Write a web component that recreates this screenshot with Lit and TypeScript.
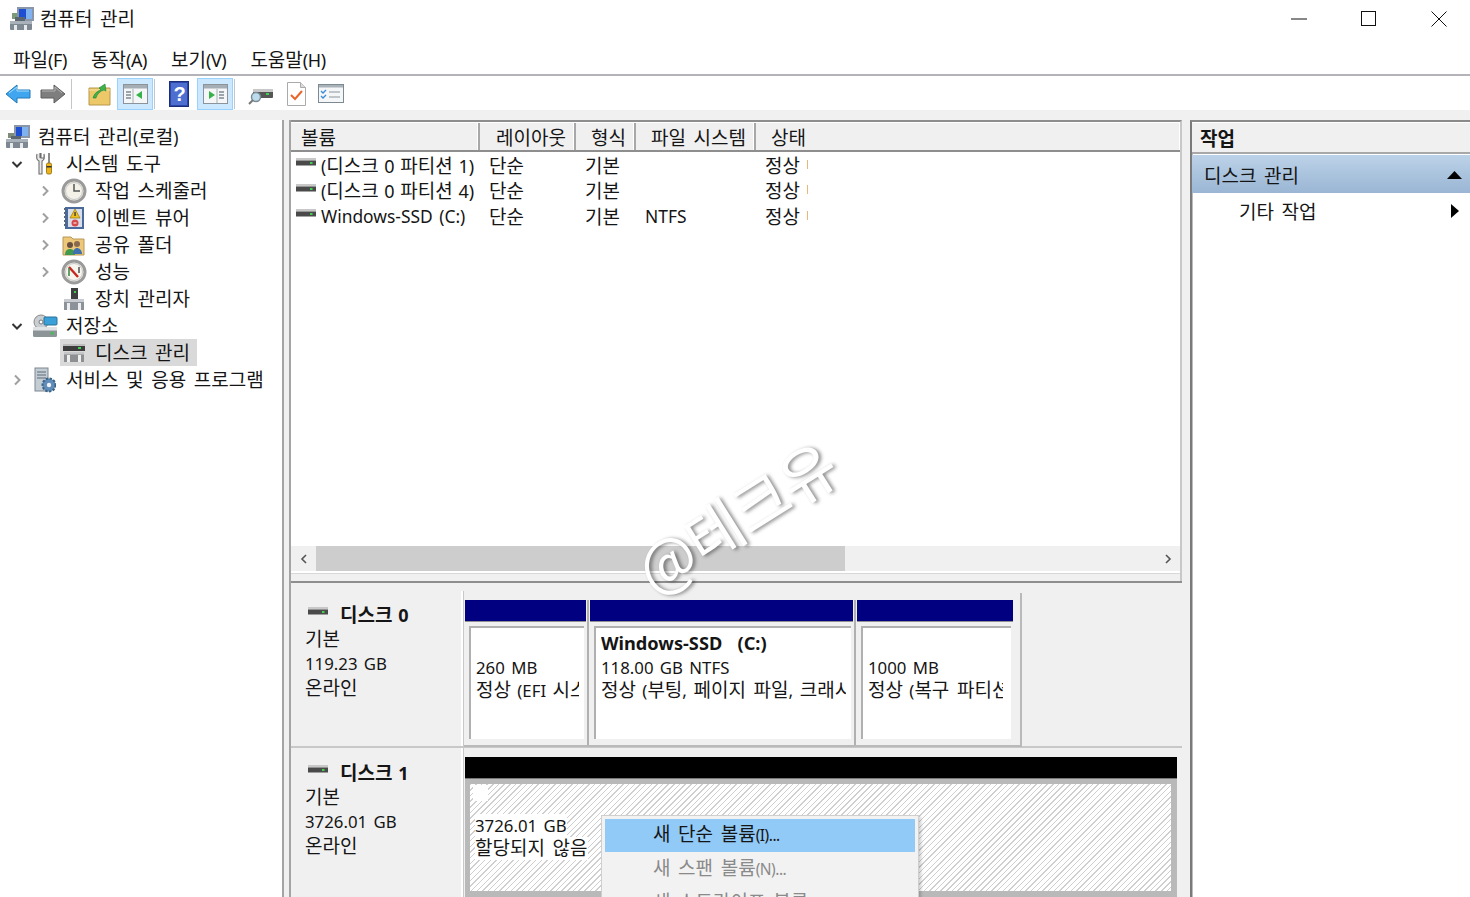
import { LitElement, html, css, svg } from "lit";
import { customElement } from "lit/decorators.js";

const icon = (w: number, h: number, body: unknown) =>
  html`<svg class="ic" width=${w} height=${h} viewBox="0 0 ${w} ${h}">${body}</svg>`;

/* Hangul and Latin need different sizes to match the reference's font: split a label into runs. */
const latClass = (run: string) =>
  /^\s*\d\)?\s*$/.test(run) ? "lat one" : /^[\s0-9.]+/.test(run) ? "lat num" : "lat";
const t = (s: string) =>
  s.split(/([\uAC00-\uD7A3]+(?: [\uAC00-\uD7A3]+)*)/).filter(Boolean).map((run) =>
    /[\uAC00-\uD7A3]/.test(run)
      ? html`<span>${run}</span>`
      : html`<span class=${latClass(run)}>${run}</span>`);

const computerIcon = () => icon(26, 26, svg`
  <rect x="9" y="1" width="16" height="13" fill="#8a97a8"/><rect x="11" y="3" width="12" height="9" fill="#1d4fd0"/><rect x="17" y="3" width="6" height="9" fill="#7fb2ee"/>
  <path d="M3 9h6v5H3z" fill="#7c8c78"/>
  <rect x="1" y="15" width="22" height="9" rx="1" fill="#7d8893"/><rect x="1" y="15" width="22" height="3" fill="#a9b2ba"/>
  <rect x="6" y="12" width="10" height="3" fill="#5c6670"/>
  <rect x="5" y="19" width="3" height="5" fill="#e6e8ea"/><rect x="15" y="19" width="3" height="5" fill="#e6e8ea"/>`);
const toolsIcon = () => icon(20, 24, svg`
  <path d="M5 1v5M2 2c-1 4 0 6 2 7v13h3V9c2-1 3-3 2-7v4H6V1" fill="#e8e8e8" stroke="#6d6d6d" stroke-width="1.1"/>
  <rect x="13" y="1" width="2" height="10" fill="#8c8c8c"/><rect x="11.5" y="11" width="5" height="11" rx="1.5" fill="#eeb416" stroke="#8c6a10" stroke-width=".8"/>
  <rect x="11.5" y="14" width="5" height="1.5" fill="#333"/>`);
const clockIcon = () => icon(26, 26, svg`
  <circle cx="13" cy="13" r="11" fill="#eeebe0" stroke="#9a9a9a" stroke-width="3"/><circle cx="13" cy="13" r="8.5" fill="#f3f1e8" stroke="#c8c8c8"/>
  <path d="M13 6v7h6" fill="none" stroke="#555" stroke-width="1.5"/>`);
const eventIcon = () => icon(22, 24, svg`
  <rect x="2" y="1" width="19" height="22" fill="#4a6a9c"/><rect x="5" y="3" width="14" height="18" fill="#d8dfeb"/>
  <path d="M2 3h-1M2 7h-1M2 11h-1M2 15h-1M2 19h-1" stroke="#333" stroke-width="1.4"/>
  <path d="M12 3l5 9H7z" fill="#f0c020" stroke="#9a7a10" stroke-width=".7"/><rect x="11.4" y="6" width="1.3" height="4" fill="#333"/>
  <circle cx="12" cy="17" r="3.5" fill="#d84a4a"/><path d="M10.5 17h3" stroke="#fff"/>`);
const shareIcon = () => icon(24, 22, svg`
  <path d="M1 3h8l2 2h11v16H1z" fill="#ecc878" stroke="#b8965a"/>
  <circle cx="8" cy="11" r="3" fill="#6a5040"/><path d="M3 21c0-4 2-6 5-6s5 2 5 6z" fill="#3f9a50"/>
  <circle cx="15" cy="10" r="3" fill="#8a6a50"/><path d="M11 20c0-4 2-6 4-6s5 2 5 6z" fill="#3f70b0"/>`);
const perfIcon = () => icon(26, 26, svg`
  <circle cx="13" cy="13" r="11" fill="#eeebe0" stroke="#9a9a9a" stroke-width="3"/><circle cx="13" cy="13" r="8.5" fill="#f7f5ee" stroke="#c8c8c8"/>
  <path d="M8 8l9 10" stroke="#c9251f" stroke-width="2.4"/><path d="M8 9v8" stroke="#3a8a4a" stroke-width="1.6"/><path d="M18 8v6" stroke="#444" stroke-width="1.4"/>`);
const devIcon = () => icon(22, 24, svg`
  <rect x="8" y="1" width="7" height="11" fill="#3f3f3f"/><rect x="11" y="4" width="2" height="2" fill="#3fcf4f"/>
  <rect x="1" y="12" width="20" height="11" fill="#8b929a"/><rect x="1" y="12" width="20" height="3" fill="#c8ccd0"/>
  <rect x="4" y="16" width="3" height="7" fill="#eee"/><rect x="15" y="16" width="3" height="7" fill="#eee"/>`);
const storageIcon = () => icon(26, 24, svg`
  <circle cx="9" cy="8" r="7" fill="#c9ced2" stroke="#888"/><circle cx="9" cy="8" r="2" fill="#fff" stroke="#777"/>
  <rect x="12" y="3" width="13" height="8" rx="1" fill="#3aa0d8" stroke="#2b7299"/>
  <rect x="1" y="13" width="24" height="10" rx="1.5" fill="#8d9498"/><rect x="1" y="13" width="24" height="3.5" fill="#dfe3e5"/><rect x="19" y="18" width="2.5" height="2.5" fill="#35c646"/>`);
const diskMgrIcon = () => icon(24, 20, svg`
  <rect x="1" y="1" width="22" height="7" fill="#3c3c3c"/><rect x="1" y="1" width="22" height="2" fill="#bdbdbd"/><rect x="16" y="4" width="3" height="2" fill="#42d04f"/>
  <rect x="2" y="9" width="20" height="10" fill="#8d8f92"/><rect x="2" y="9" width="20" height="2.5" fill="#c4c6c8"/>
  <rect x="5" y="12" width="3" height="7" fill="#eee"/><rect x="16" y="12" width="3" height="7" fill="#eee"/>`);
const svcIcon = () => icon(22, 26, svg`
  <rect x="1" y="1" width="13" height="23" fill="#c4ccd4" stroke="#7d8890"/>
  <path d="M3 5h9M3 8h9M3 11h9" stroke="#5c6a76"/><rect x="10" y="14" width="2" height="2" fill="#4ccf5a"/>
  <circle cx="15" cy="18" r="6.5" fill="#5f8cb8" stroke="#3c6488" stroke-width="2" stroke-dasharray="2.4 1.4"/><circle cx="15" cy="18" r="2.2" fill="#eef3f8"/>`);
const volIcon = (w = 20) => icon(w, 9, svg`
  <rect x="0" y="0" width=${w} height="2.5" fill="#c8c8c8"/><rect x="0" y="2.5" width=${w} height="5" fill="#4a4a4a"/><rect x=${w - 6} y="4" width="2.5" height="2" fill="#3fd04f"/>`);
const chev = (open: boolean) => open
  ? icon(12, 12, svg`<path d="M1.5 4l4.5 4.5L10.5 4" fill="none" stroke="#333" stroke-width="2"/>`)
  : icon(12, 12, svg`<path d="M4 1.5L8.5 6 4 10.5" fill="none" stroke="#a0a0a0" stroke-width="2"/>`);

const paneIcon = (left: boolean) => icon(25, 20, svg`
  <rect x="0.5" y="0.5" width="24" height="19" fill="#f4f6f7" stroke="#8a949a"/><rect x="1" y="1" width="23" height="3.5" fill="#a4aeb4"/>
  <path d="M${left ? 3 : 16} 8h5M${left ? 3 : 16} 11h5M${left ? 3 : 16} 14h5" stroke="#7e8a92" stroke-width="1.3"/>
  <path d="M${left ? 10 : 14} 5v14" stroke="#a8b0b6"/>
  ${left ? svg`<path d="M19 7v8l-6-4z" fill="#37b24a"/>` : svg`<path d="M6 7v8l6-4z" fill="#37b24a"/>`}`);

interface TreeNode { label: string; level: number; ic: () => unknown; chev?: "open" | "closed"; sel?: boolean; }
const tree: TreeNode[] = [
  { label: "컴퓨터 관리(로컬)", level: 0, ic: computerIcon },
  { label: "시스템 도구", level: 1, ic: toolsIcon, chev: "open" },
  { label: "작업 스케줄러", level: 2, ic: clockIcon, chev: "closed" },
  { label: "이벤트 뷰어", level: 2, ic: eventIcon, chev: "closed" },
  { label: "공유 폴더", level: 2, ic: shareIcon, chev: "closed" },
  { label: "성능", level: 2, ic: perfIcon, chev: "closed" },
  { label: "장치 관리자", level: 2, ic: devIcon },
  { label: "저장소", level: 1, ic: storageIcon, chev: "open" },
  { label: "디스크 관리", level: 2, ic: diskMgrIcon, sel: true },
  { label: "서비스 및 응용 프로그램", level: 1, ic: svcIcon, chev: "closed" },
];

const vols = [
  ["(디스크 0 파티션 1)", "단순", "기본", "", "정상"],
  ["(디스크 0 파티션 4)", "단순", "기본", "", "정상"],
  ["Windows-SSD (C:)", "단순", "기본", "NTFS", "정상"],
];

@customElement("app-root")
export class AppRoot extends LitElement {
  static styles = css`
    :host { display: block; width: 1470px; height: 897px; overflow: hidden; position: relative; background: #fff; color: #151515;
      font-family: "Noto Sans", "Noto Sans CJK KR", sans-serif; font-size: 19px; word-spacing: 2.7px; }
    * { box-sizing: border-box; }
    .ic { display: block; flex: none; }
    .lat { font-size: 17.4px; word-spacing: 2px; }
    .lat.num { font-size: 16.8px; }
    .lat.one { font-size: 18px; word-spacing: 1px; }
    .title { height: 38px; display: flex; align-items: center; padding-left: 10px; gap: 6px; position: relative; }
    .title .t { line-height: 38px; }
    .winbtns { margin-left: auto; display: flex; }
    .winbtn { width: 70px; height: 38px; display: flex; align-items: center; justify-content: flex-end; padding-right: 23px; }
    .menu { height: 38px; border-bottom: 2px solid #b4b4b8; display: flex; padding-left: 13px; gap: 24px; align-items: center; padding-top: 5px; }
    .menu .lat { font-size: 18px; letter-spacing: -.4px; }
    .tools { height: 34px; display: flex; align-items: center; padding: 2px 0 0 5px; }
    .sep { width: 1px; height: 30px; background: #c6c6c6; margin: 0 2px; }
    .tbtn { height: 32px; width: 36px; display: flex; align-items: center; justify-content: center; }
    .tbtn.on { background: #cce8ff; border: 1px solid #99d1ff; }
    .main { height: 787px; background: #f0f0f0; display: flex; padding-top: 10px; }
    .treep { width: 284px; background: #fff; border-right: 2px solid #a4a4a4; padding-top: 3px; flex: none; }
    .row { height: 27px; display: flex; align-items: center; line-height: 27px; white-space: nowrap; }
    .chevslot { width: 12px; flex: none; }
    .l0 { padding-left: 5px; } .l0 .ictxt { gap: 7px; }
    .l1 { padding-left: 11px; } .l1 .ictxt { margin-left: 10px; }
    .l2 { padding-left: 39px; } .l2 .ictxt { margin-left: 9px; }
    .ictxt { display: flex; align-items: center; height: 27px; }
    .ictxt > span { padding-top: 2px; }
    .icbox { display: flex; justify-content: center; align-items: center; }
    .l1 .icbox { width: 26px; margin-right: 8px; margin-left: -1px; }
    .l2 .icbox { width: 26px; margin-right: 8px; margin-left: 1px; }
    .sel { background: #d9d9d9; padding-right: 7px; }
    .center { width: 893px; margin-left: 5px; flex: none; border-left: 2px solid #a4a4a4; display: flex; flex-direction: column; }
    .upper { height: 461px; flex: none; background: #fff; border-top: 2px solid #8e8e8e; border-right: 2px solid #c8c8c8; display: flex; flex-direction: column; position: relative; }
    .hdr { height: 30px; display: flex; background: #f0f0f0; border-top: 1px solid #fff; border-bottom: 2px solid #8e8e8e; flex: none; }
    .hc { border-right: 2px solid #a8a8a8; line-height: 31px; white-space: nowrap; box-shadow: inset -1px 0 0 #fff; }
    .hc.c0 { width: 189px; padding-left: 10px; }
    .hc.c1 { width: 96px; text-align: right; padding-right: 8px; }
    .hc.c2 { width: 60px; text-align: right; padding-right: 8px; }
    .hc.c3 { width: 120px; text-align: right; padding-right: 8px; }
    .hc.c4 { flex: 1; border: none; padding-left: 15px; }
    .list { flex: 1; }
    .vrow { height: 25.5px; display: flex; align-items: center; white-space: nowrap; }
    .vc0 { width: 198px; display: flex; align-items: center; gap: 5px; padding-left: 5px; }
    .vc1 { width: 96px; } .vc2 { width: 60px; } .vc3 { width: 120px; }
    .vc4 { position: relative; width: 43px; }
    .vc4::after { content: ""; position: absolute; right: 0; top: 9px; width: 1px; height: 9px; background: #e8b878; }
    .vrow svg { margin-top: -4px; }
    .hscroll { height: 25px; background: #f0f0f0; display: flex; align-items: center; margin-bottom: 2px; flex: none; }
    .band { height: 8px; background: #f0f0f0; border-top: 1px solid #d8d8d8; flex: none; }
    .arrbtn { width: 25px; height: 25px; display: flex; align-items: center; justify-content: center; flex: none; }
    .thumb { width: 529px; height: 25px; background: #cdcdcd; flex: none; }
    .sp { flex: 1; }
    .lower { flex: 1; min-height: 0; background: #f0f0f0; border-top: 2px solid #8e8e8e; padding-top: 8px; overflow: hidden; }
    .disk { display: flex; border-bottom: 2px solid #c8c8c8; }
    .disk.d0 { height: 157px; }
    .disk.d1 { border: none; height: 160px; }
    .dinfo { width: 172px; flex: none; border-right: 2px solid #fff; padding: 12px 0 0 14px; line-height: 24px; box-shadow: 1px 0 0 #c8c8c8; }
    .d1 .dinfo { padding-top: 13px; }
    .dname { display: flex; align-items: center; gap: 12px; font-weight: 700; height: 24px; margin-left: 3px; }
    .dname svg { margin-top: -8px; }
    .parts { display: flex; margin-left: 1px; height: 154px; border: 2px solid #b9b9b9; border-left: none; border-top: none; padding-top: 7px; position: relative; top: 2px; }
    .part { border-right: 2px solid #b0b0b0; display: flex; flex-direction: column; padding-left: 1px; }
    .part:last-child { border-right: none; padding-right: 6px; }
    .navy { height: 22px; background: #000080; margin-right: 1px; border-bottom: 1px solid #909090; flex: none; }
    .pbody { flex: none; height: 113px; background: #fff; margin: 4px 3px 0 4px; border-top: 2px solid #b0b0b0; border-left: 2px solid #b0b0b0; padding: 4px 5px 0 5px; line-height: 23.5px; white-space: nowrap; }
    .part:last-child .pbody { padding-right: 8px; }
    .clip { overflow: hidden; height: 100%; }
    .pbody b { font-weight: 700; display: block; }
    .pbody b .lat { font-size: 18.2px; }
    .pbody .blank { height: 23.5px; }
    .d1wrap { flex: none; width: 712px; margin-left: 2px; margin-top: 9px; }
    .black { height: 22px; background: #000; border-bottom: 1px solid #777; }
    .hatchbox { background: #b9b9b9; padding: 5px 6px 6px 5px; height: 140px; }
    .hatch { height: 107px; padding: 30px 0 0 5px; line-height: 23px; background-color: #fff;
      background-image: repeating-linear-gradient(135deg, #cfcfcf 0 1px, #fff 1px 4px); position: relative; }
    .hatch span.ln { display: block; width: max-content; background: #fff; white-space: nowrap; }
    .hatch::before { content: ""; position: absolute; left: 3px; top: 1px; width: 15px; height: 16px; background: #fff; }
    .actions { margin-left: 8px; flex: 1; border-left: 2px solid #7a7a7a; border-top: 2px solid #8a8a8a; background: #fff; box-shadow: inset 1px 0 0 #bcbcbc; }
    .ah { height: 32px; background: #f0f0f0; border-top: 1px solid #fff; border-bottom: 2px solid #a8a8a8; line-height: 33px; padding-left: 8px; font-weight: 700; }
    .ab { height: 38px; background: linear-gradient(#bcd2e8, #9ab6d4); margin-top: 1px; display: flex; align-items: center; padding: 1px 8px 0 12px; justify-content: space-between; }
    .ai { height: 36px; display: flex; align-items: center; padding: 0 11px 0 47px; justify-content: space-between; }
    .ctx { position: absolute; left: 601px; top: 815px; width: 318px; height: 120px; background: #f2f2f2; border: 1px solid #cfcfcf; padding: 3px; box-shadow: 2px 2px 3px rgba(0,0,0,.2); }
    .ctx div { height: 33px; line-height: 31px; padding-left: 48px; white-space: nowrap; }
    .ctx .lat { font-size: 15.5px; letter-spacing: -.5px; }
    .ctx .hi { background: #91c9f7; }
    .ctx .dis { color: #8a8a8a; margin-top: 1px; }
    .wm { position: absolute; left: 662px; top: 528px; font-size: 61px; line-height: 80px; color: #fff; font-family: "Noto Sans CJK KR", sans-serif; white-space: nowrap;
      transform: rotate(-32deg); transform-origin: 0 100%; text-shadow: 2px 2px 4px rgba(0,0,0,.45); letter-spacing: -1px; pointer-events: none; word-spacing: 0; }
  `;

  render() {
    return html`
      <div class="title">
        ${icon(24, 24, svg`
          <rect x="7" y="0" width="17" height="14" fill="#8a97a8"/><rect x="9" y="2" width="13" height="10" fill="#1d4fd0"/><rect x="16" y="2" width="6" height="10" fill="#7fb2ee"/>
          <path d="M2 6h5v6H2z" fill="#7c9c78"/>
          <rect x="0" y="14" width="22" height="9" rx="1" fill="#7d8893"/><rect x="0" y="14" width="22" height="3" fill="#a9b2ba"/>
          <rect x="5" y="10" width="10" height="4" fill="#5c6670"/><rect x="4" y="18" width="3" height="5" fill="#e6e8ea"/><rect x="14" y="18" width="3" height="5" fill="#e6e8ea"/>`)}
        <span class="t">컴퓨터 관리</span>
        <div class="winbtns">
          <div class="winbtn">${icon(16, 16, svg`<path d="M0 8h16" stroke="#111"/>`)}</div>
          <div class="winbtn">${icon(16, 16, svg`<rect x=".5" y=".5" width="14" height="14" fill="none" stroke="#111"/>`)}</div>
          <div class="winbtn">${icon(16, 16, svg`<path d="M.5.5l15 15M15.5.5l-15 15" stroke="#111"/>`)}</div>
        </div>
      </div>
      <div class="menu">
        <span>${t("파일(F)")}</span><span>${t("동작(A)")}</span><span>${t("보기(V)")}</span><span>${t("도움말(H)")}</span>
      </div>
      <div class="tools">
        ${icon(26, 22, svg`<path d="M1 11l11-9v5h13v8H12v5z" fill="#3fa6ef" stroke="#2478b8"/><path d="M4 10l8-6v4h12" fill="none" stroke="#a8dcff"/>`)}
        <div style="width:9px"></div>
        ${icon(26, 22, svg`<path d="M25 11l-11-9v5H1v8h13v5z" fill="#7e7e7e" stroke="#5e5e5e"/><path d="M2 8h13V4l7 6" fill="none" stroke="#b4b4b4"/>`)}
        <div class="sep" style="margin-left:5px;margin-right:16px"></div>
        ${icon(23, 24, svg`<path d="M1 6h6l2 0h13v17H1z" fill="#ecc868" stroke="#b8964a"/><path d="M1 8h21" stroke="#f6e2a6"/><path d="M5 16c1-4 4-7 8-8l-2-2 6-4 1 7-2-1c-4 1-7 4-8 8z" fill="#3fb34a" stroke="#1f7f2f" stroke-width=".6"/>`)}
        <div class="tbtn on" style="margin-left:6px">${paneIcon(true)}</div>
        <div class="sep" style="margin-left:1px;margin-right:14px"></div>
        ${icon(21, 26, svg`<rect x=".5" y=".5" width="19" height="25" fill="#2a47a8" stroke="#1a2f78"/><rect x="2" y="2" width="16" height="22" fill="#4f6fd0"/><text x="4.5" y="20" font-size="20" font-weight="700" font-family="Liberation Sans" fill="#fff">?</text>`)}
        <div class="tbtn on" style="margin-left:7px">${paneIcon(false)}</div>
        <div class="sep" style="margin-left:1px;margin-right:13px"></div>
        ${icon(26, 24, svg`<rect x="5" y="8" width="20" height="8" rx="1" fill="#555"/><rect x="5" y="7" width="20" height="3" fill="#c8c8c8"/><rect x="18" y="11" width="3" height="2" fill="#3fd04f"/><circle cx="8" cy="15" r="4.5" fill="#bcdcee" stroke="#7a8a92" stroke-width="1.4"/><path d="M5 18l-4 4" stroke="#777" stroke-width="2"/>`)}
        <div style="width:13px"></div>
        ${icon(19, 24, svg`<path d="M.5.5h13l5 5v18H.5z" fill="#fff" stroke="#aaa"/><path d="M13.5.5v5h5" fill="#ddd" stroke="#aaa"/><path d="M4 13l4 4 7-8" fill="none" stroke="#e8662a" stroke-width="2"/>`)}
        <div style="width:12px"></div>
        ${icon(26, 20, svg`<rect x=".5" y=".5" width="25" height="18" fill="#f4f6f7" stroke="#7e8a92"/><rect x="1" y="1" width="24" height="2.5" fill="#a8b2b8"/><path d="M3 7l2 2 3-3M3 12l2 2 3-3" fill="none" stroke="#3a8ad8" stroke-width="1.3"/><path d="M11 8h11M11 13h11" stroke="#8a949a" stroke-width="1.2"/>`)}
      </div>
      <div class="main">
        <div class="treep">
          ${tree.map((n) => html`
            <div class="row l${n.level}">
              ${n.level > 0 ? html`<div class="chevslot">${n.chev ? chev(n.chev === "open") : ""}</div>` : ""}
              <div class="ictxt ${n.sel ? "sel" : ""}">
                <div class="icbox">${n.ic()}</div><span>${t(n.label)}</span>
              </div>
            </div>`)}
        </div>
        <div class="center">
          <div class="upper">
            <div class="hdr">
              <div class="hc c0">볼륨</div><div class="hc c1">레이아웃</div><div class="hc c2">형식</div><div class="hc c3">파일 시스템</div><div class="hc c4">상태</div>
            </div>
            <div class="list">
              ${vols.map((v) => html`<div class="vrow">
                <div class="vc0">${volIcon()}<span>${t(v[0])}</span></div>
                <div class="vc1">${v[1]}</div><div class="vc2">${v[2]}</div><div class="vc3">${t(v[3])}</div><div class="vc4">${v[4]}</div>
              </div>`)}
            </div>
            <div class="hscroll">
              <div class="arrbtn">${icon(8, 10, svg`<path d="M6 1L2 5l4 4" fill="none" stroke="#555" stroke-width="1.6"/>`)}</div>
              <div class="thumb"></div><div class="sp"></div>
              <div class="arrbtn">${icon(8, 10, svg`<path d="M2 1l4 4-4 4" fill="none" stroke="#555" stroke-width="1.6"/>`)}</div>
            </div>
            <div class="band"></div>
          </div>
          <div class="lower">
            <div class="disk d0">
              <div class="dinfo">
                <div class="dname">${volIcon()}<span>${t("디스크 0")}</span></div>
                <div>기본</div><div>${t("119.23 GB")}</div><div>온라인</div>
              </div>
              <div class="parts">
                <div class="part" style="width:125px"><div class="navy"></div><div class="pbody"><div class="clip"><div class="blank"></div>${t("260 MB")}<br>${t("정상 (EFI 시스")}</div></div></div>
                <div class="part" style="width:267px"><div class="navy"></div><div class="pbody"><div class="clip"><b>${t("Windows-SSD")}&nbsp;&nbsp;${t("(C:)")}</b>${t("118.00 GB NTFS")}<br>${t("정상 (부팅, 페이지 파일, 크래시")}</div></div></div>
                <div class="part" style="width:164px"><div class="navy"></div><div class="pbody"><div class="clip"><div class="blank"></div>${t("1000 MB")}<br>${t("정상 (복구 파티션")}</div></div></div>
              </div>
            </div>
            <div class="disk d1">
              <div class="dinfo">
                <div class="dname">${volIcon()}<span>${t("디스크 1")}</span></div>
                <div>기본</div><div>${t("3726.01 GB")}</div><div>온라인</div>
              </div>
              <div class="d1wrap">
                <div class="black"></div>
                <div class="hatchbox"><div class="hatch"><span class="ln">${t("3726.01 GB")}</span><span class="ln">할당되지 않음</span></div></div>
              </div>
            </div>
          </div>
        </div>
        <div class="actions">
          <div class="ah">작업</div>
          <div class="ab"><span>디스크 관리</span>${icon(15, 8, svg`<path d="M0 8L7.5 0 15 8z" fill="#000"/>`)}</div>
          <div class="ai"><span>기타 작업</span>${icon(8, 14, svg`<path d="M0 0l8 7-8 7z" fill="#000"/>`)}</div>
        </div>
      </div>
      <div class="ctx">
        <div class="hi">${t("새 단순 볼륨(I)...")}</div>
        <div class="dis">${t("새 스팬 볼륨(N)...")}</div>
        <div class="dis">${t("새 스트라이프 볼륨(T)...")}</div>
      </div>
      <div class="wm">@테크유</div>
    `;
  }
}
